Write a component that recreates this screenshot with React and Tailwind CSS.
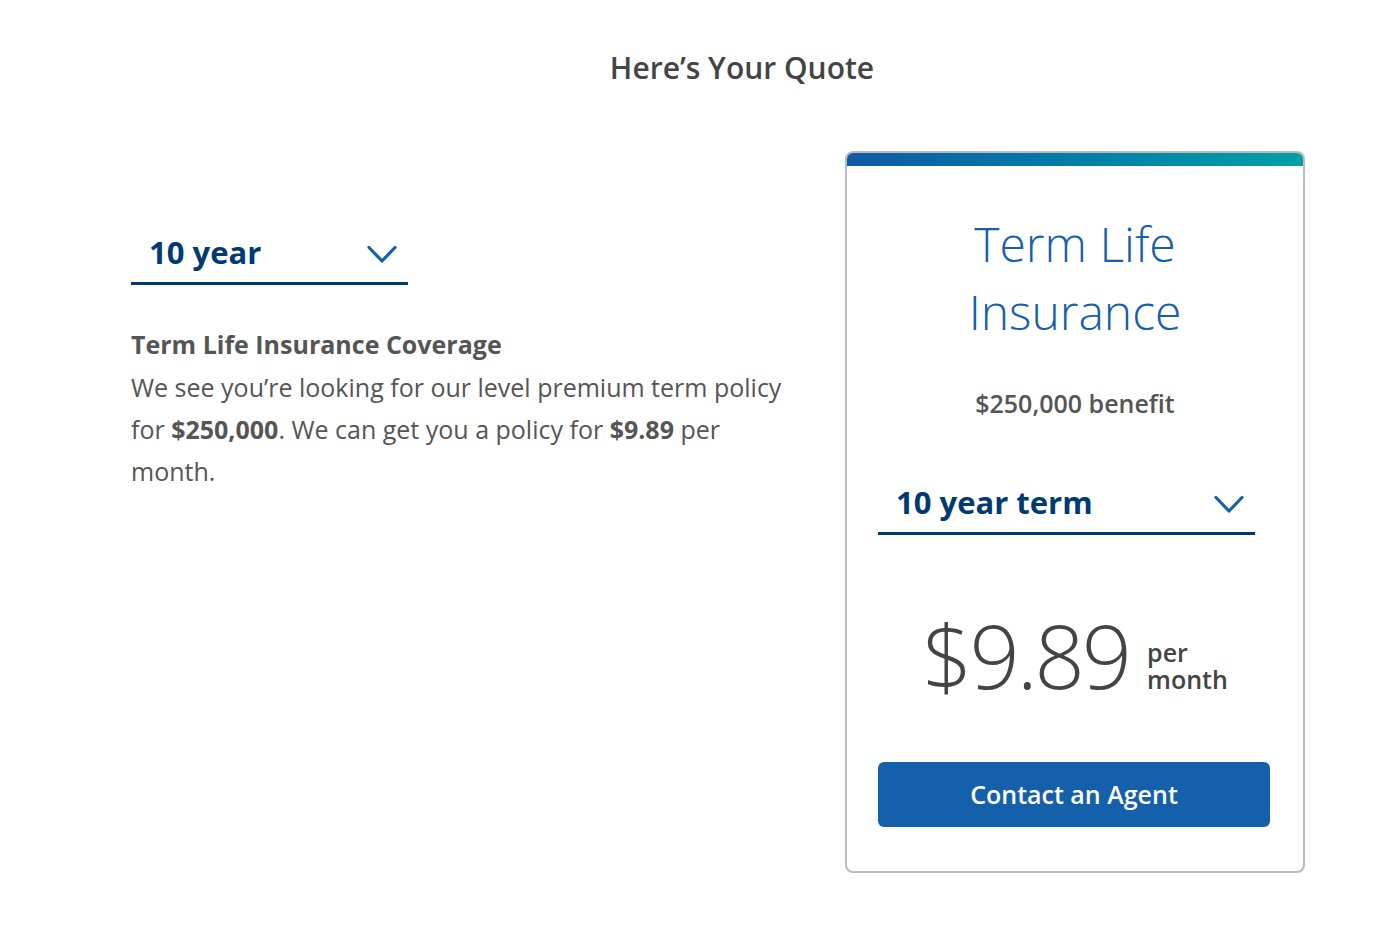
const font = { fontFamily: "'Open Sans', 'Noto Sans', sans-serif" }

const Chevron = () => (
  <svg width="30" height="19" viewBox="0 0 30 19" fill="none" className="text-[#1560aa] mt-[4px]">
    <polyline points="2,2.5 15,16 28,2.5" stroke="currentColor" strokeWidth="3.2" strokeLinecap="round" strokeLinejoin="round" />
  </svg>
)

const Select = ({ label, width }) => {
  return (
    <div className={`flex items-center justify-between border-b-[3px] border-[#003a70] pl-[18px] pr-[11px] pb-[2px] h-[60px] ${width}`}>
      <span className="text-[31px] font-bold text-[#003a70] leading-none">{label}</span>
      <Chevron />
    </div>
  )
}

export default function App() {
  return (
    <div className="min-h-[938px] bg-white text-[#555]" style={font}>
      <h1 className="pt-[50px] text-center text-[30px] font-semibold text-[#444] leading-[36px] pl-[96px]">
        Here’s Your Quote
      </h1>
      <div className="flex pl-[131px] pt-[65px] gap-[45px]">
        <div className="w-[669px] pt-[74px]">
          <Select label="10 year" width="w-[277px]" />
          <h2 className="mt-[41px] text-[25px] font-bold leading-[36px] text-[#555]">
            Term Life Insurance Coverage
          </h2>
          <p className="mt-[4px] text-[25px] leading-[42px] text-[#555]">
            We see you’re looking for our level premium term policy for <b>$250,000</b>. We can get you a policy for <b>$9.89</b> per month.
          </p>
        </div>
        <div className="w-[460px] h-[722px] border-2 border-[#bbb] rounded-[8px] overflow-hidden flex flex-col">
          <div className="h-[13px] bg-gradient-to-r from-[#1059a5] to-[#03a0a8]" />
          <div className="flex flex-col items-center px-[31px]">
            <h3 className="mt-[44px] text-center text-[48px] font-light leading-[68px] text-[#1560aa]">
              Term Life
              <br />
              Insurance
            </h3>
            <p className="mt-[42px] text-[25px] font-semibold text-[#555] leading-[30px]">$250,000 benefit</p>
            <div className="mt-[57px] self-start">
              <Select label="10 year term" width="w-[377px]" />
            </div>
            <div className="mt-[70px] flex items-end gap-[18px]">
              <span className="text-[88px] font-light leading-[100px] text-[#444] tracking-[-3px]">$9.89</span>
              <span className="text-[25px] font-semibold leading-[27px] text-[#444] pb-[12px]">
                per
                <br />
                month
              </span>
            </div>
            <button className="mt-[57px] self-start w-[392px] h-[65px] rounded-[6px] bg-[#1560aa] text-white text-[25px] font-semibold">
              Contact an Agent
            </button>
          </div>
        </div>
      </div>
    </div>
  )
}
